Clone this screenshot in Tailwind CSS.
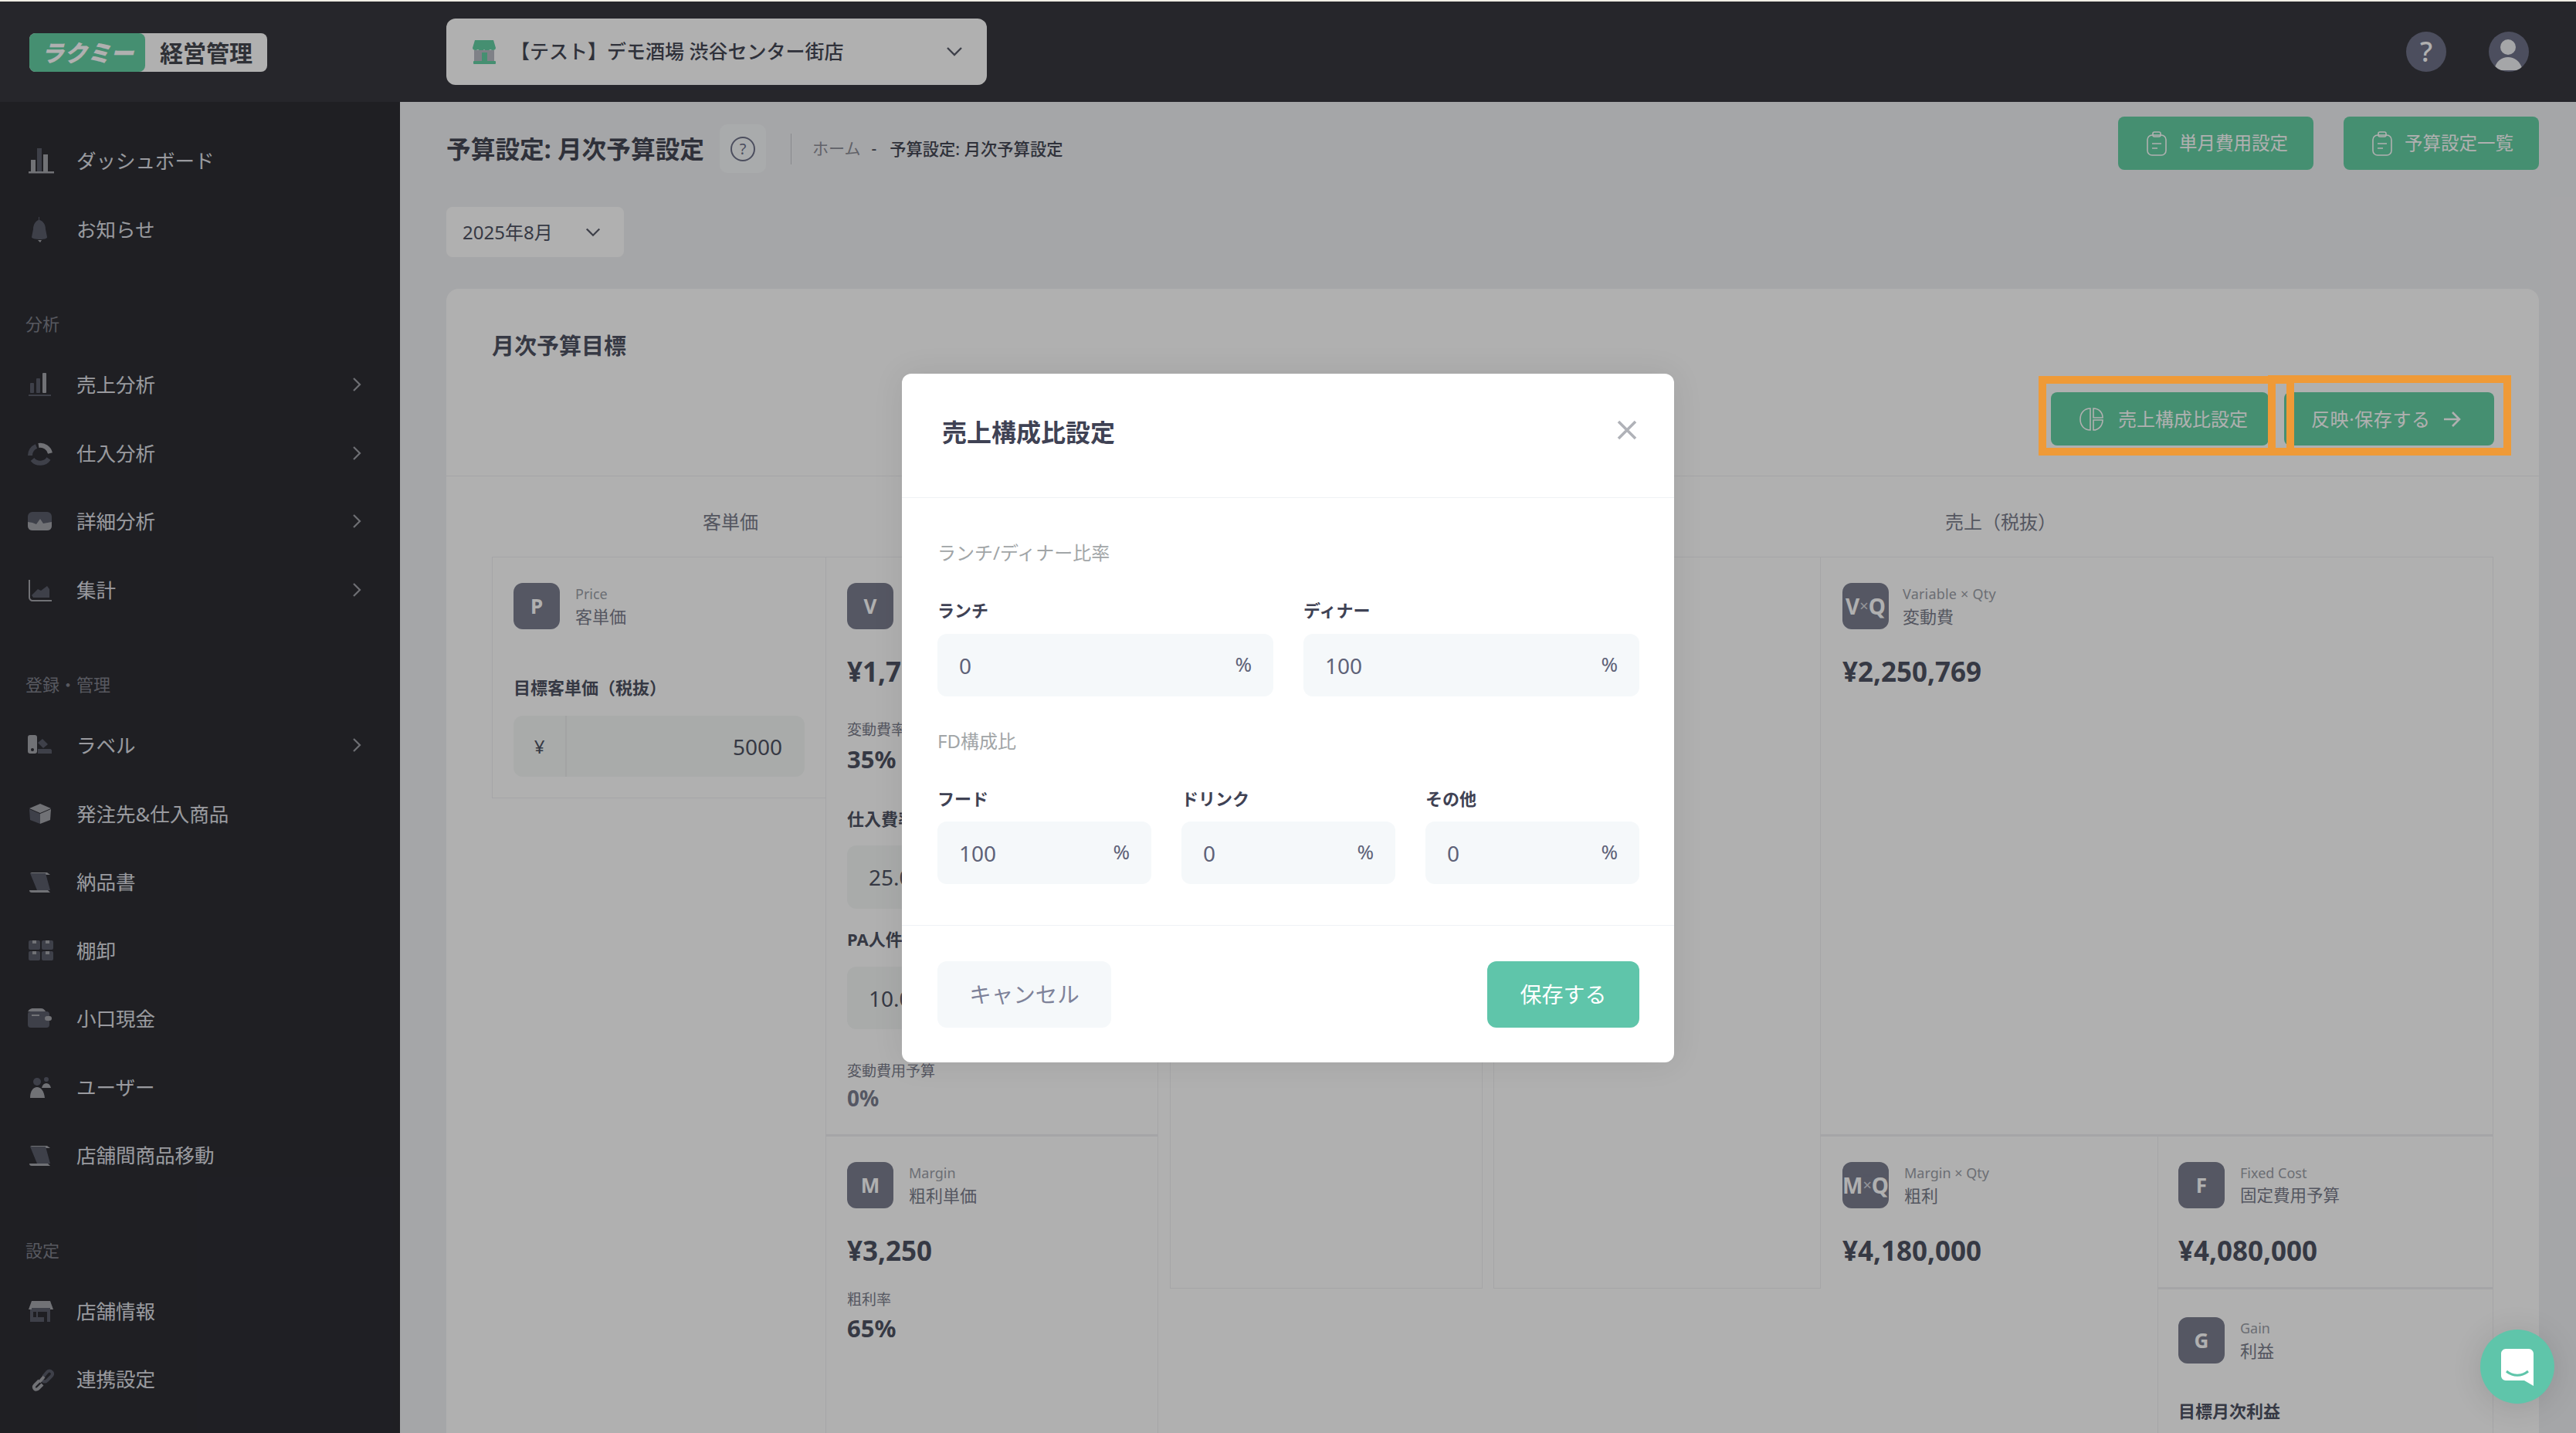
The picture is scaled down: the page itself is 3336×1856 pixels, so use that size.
<!DOCTYPE html>
<html lang="ja">
<head>
<meta charset="utf-8">
<title>予算設定</title>
<script src="https://cdn.jsdelivr.net/npm/@tailwindcss/browser@4"></script>
</head>
<body class="m-0">
<div class="relative w-[3336px] h-[1856px] overflow-hidden bg-[#f0f1f3] text-[#4f5363] [font-family:'Noto_Sans','Noto_Sans_CJK_JP',sans-serif]">

  <!-- Header -->
  <header class="h-[132px] bg-[#38383f] flex items-center border-t-2 border-[#f0ede5] relative">
    <div class="ml-[38px] w-[308px] h-[50px] flex rounded-[8px] overflow-hidden bg-white mt-[2px]">
      <div class="w-[150px] bg-[#65cfa4] rounded-r-[8px] flex items-center justify-center text-white text-[30px] font-black italic">ラクミー</div>
      <div class="flex-1 flex items-center justify-center text-[#45474f] text-[30px] font-bold">経営管理</div>
    </div>
    <div class="ml-[232px] w-[700px] h-[86px] bg-white rounded-[12px] flex items-center pl-[32px] pr-[30px]">
      <svg width="34" height="34" viewBox="0 0 34 34" class="shrink-0"><path d="M5 2h24l3 10c0 3-4 4-7 2-3 2-6 2-8 0-2 2-5 2-8 0-3 2-7 1-7-2z" fill="#65cfa4"/><rect x="4" y="15" width="26" height="14" fill="#b9bcc4"/><rect x="14" y="18" width="7" height="12" fill="#65cfa4"/><rect x="3" y="29" width="29" height="4" rx="1" fill="#65cfa4"/></svg>
      <span class="ml-[17px] text-[25px] text-[#454855] font-medium flex-1 whitespace-nowrap">【テスト】デモ酒場 渋谷センター街店</span>
      <svg width="24" height="24" viewBox="0 0 24 24" fill="none" stroke="#5a5d6b" stroke-width="2.4" class="shrink-0"><path d="M3 7l9 9 9-9"/></svg>
    </div>
    <div class="ml-auto mr-[61px] flex gap-[55px]">
      <div class="w-[52px] h-[52px] rounded-full bg-[#6f7289] flex items-center justify-center text-white text-[36px] font-medium">?</div>
      <div class="w-[52px] h-[52px] rounded-full bg-[#6f7289] overflow-hidden">
        <svg width="52" height="52" viewBox="0 0 52 52"><circle cx="25" cy="20" r="10" fill="#f0f1f3"/><path d="M7 50c2-12 10-17 18-17s16 5 19 17z" fill="#f0f1f3"/></svg>
      </div>
    </div>
  </header>

  <div class="flex h-[1724px]">
    <!-- Sidebar -->
    <aside class="w-[518px] shrink-0 bg-[#2d2d34] pt-[32px] text-[#dfe0e6] text-[25.5px]">
      <div class="h-[88.5px] flex items-center pl-[36px]">
        <svg width="34" height="34" viewBox="0 0 34 34" class="shrink-0"><rect x="4" y="16" width="6" height="15" fill="#a4a5ab"/><rect x="12" y="1" width="6" height="30" fill="#5a5d6b"/><rect x="20" y="9" width="6" height="22" fill="#a4a5ab"/><rect x="1" y="31" width="33" height="2.5" fill="#a4a5ab"/></svg>
        <span class="ml-[29px]">ダッシュボード</span>
      </div>
      <div class="h-[88.5px] flex items-center pl-[36px]">
        <svg width="34" height="34" viewBox="0 0 34 34" class="shrink-0"><path d="M14 1h1v4c5 1 8 6 8 12l2 10c0 2-3 3-9 3s-11-1-11-3l2-10c0-6 3-11 7-12z" fill="#5a5d6b"/><path d="M13 31h5l-2 3z" fill="#a4a5ab"/></svg>
        <span class="ml-[29px]">お知らせ</span>
      </div>

      <div class="pt-[63px] pl-[33px] h-[113px] text-[22px] leading-[30px] text-[#80828c]">分析</div>

      <div class="h-[88.5px] flex items-center pl-[36px] pr-[48px]">
        <svg width="32" height="32" viewBox="0 0 32 32" class="shrink-0"><rect x="3" y="14" width="5" height="13" rx="1" fill="#5a5d6b"/><rect x="11" y="8" width="5" height="19" rx="1" fill="#5a5d6b"/><rect x="19" y="1" width="5" height="26" rx="1" fill="#a4a5ab"/><rect x="1" y="29" width="29" height="2" fill="#5a5d6b"/></svg>
        <span class="ml-[31px] flex-1">売上分析</span>
        <svg width="16" height="20" viewBox="0 0 16 20" fill="none" stroke="#a0a1a8" stroke-width="2.2"><path d="M4 2l8 8-8 8"/></svg>
      </div>
      <div class="h-[88.5px] flex items-center pl-[36px] pr-[48px]">
        <svg width="32" height="32" viewBox="0 0 32 32" class="shrink-0"><path d="M3 19a13 13 0 0 1 8-12" fill="none" stroke="#5a5d6b" stroke-width="6"/><path d="M14 6a13 13 0 0 1 15 10" fill="none" stroke="#a4a5ab" stroke-width="6"/><path d="M27 23a13 13 0 0 1-21 1" fill="none" stroke="#5a5d6b" stroke-width="6"/></svg>
        <span class="ml-[31px] flex-1">仕入分析</span>
        <svg width="16" height="20" viewBox="0 0 16 20" fill="none" stroke="#a0a1a8" stroke-width="2.2"><path d="M4 2l8 8-8 8"/></svg>
      </div>
      <div class="h-[88.5px] flex items-center pl-[36px] pr-[48px]">
        <svg width="32" height="32" viewBox="0 0 32 32" class="shrink-0"><rect x="0" y="4" width="31" height="24" rx="6" fill="#5a5d6b"/><path d="M0 17l6 1 5 2 5-7 4 6 11-2v5c0 3-2 6-6 6H6c-4 0-6-3-6-6z" fill="#a4a5ab"/></svg>
        <span class="ml-[31px] flex-1">詳細分析</span>
        <svg width="16" height="20" viewBox="0 0 16 20" fill="none" stroke="#a0a1a8" stroke-width="2.2"><path d="M4 2l8 8-8 8"/></svg>
      </div>
      <div class="h-[88.5px] flex items-center pl-[36px] pr-[48px]">
        <svg width="32" height="32" viewBox="0 0 32 32" class="shrink-0"><path d="M5 23l8-8 4 2 8-6 3 4v11H7z" fill="#5a5d6b"/><path d="M2 3v23c0 2 2 4 4 4h25" fill="none" stroke="#a4a5ab" stroke-width="2"/></svg>
        <span class="ml-[31px] flex-1">集計</span>
        <svg width="16" height="20" viewBox="0 0 16 20" fill="none" stroke="#a0a1a8" stroke-width="2.2"><path d="M4 2l8 8-8 8"/></svg>
      </div>

      <div class="pt-[63px] pl-[33px] h-[113px] text-[22px] leading-[30px] text-[#80828c]">登録・管理</div>

      <div class="h-[88.5px] flex items-center pl-[36px] pr-[48px]">
        <svg width="32" height="32" viewBox="0 0 32 32" class="shrink-0"><rect x="0" y="3" width="12" height="24" rx="3" fill="#a4a5ab"/><circle cx="6" cy="22" r="2" fill="#2d2d34"/><path d="M13 13l6-5 7 7-6 5z" fill="#5a5d6b"/><path d="M13 21h16c1 0 2 1 2 2v4H13z" fill="#5a5d6b"/></svg>
        <span class="ml-[31px] flex-1">ラベル</span>
        <svg width="16" height="20" viewBox="0 0 16 20" fill="none" stroke="#a0a1a8" stroke-width="2.2"><path d="M4 2l8 8-8 8"/></svg>
      </div>
      <div class="h-[88.5px] flex items-center pl-[36px]">
        <svg width="32" height="32" viewBox="0 0 32 32" class="shrink-0"><path d="M16 3l14 6-14 6L2 9z" fill="#a4a5ab"/><path d="M2 10l14 6v13L3 24z" fill="#5a5d6b"/><path d="M30 10l-14 6v13l13-5z" fill="#a4a5ab"/></svg>
        <span class="ml-[31px]">発注先&amp;仕入商品</span>
      </div>
      <div class="h-[88.5px] flex items-center pl-[36px]">
        <svg width="32" height="32" viewBox="0 0 32 32" class="shrink-0"><path d="M3 4h22l4 3H9z" fill="#a4a5ab"/><path d="M3 5h20l6 22H12z" fill="#5a5d6b"/><path d="M2 27h24l3 3H5c-2 0-3-1-3-3z" fill="#a4a5ab"/></svg>
        <span class="ml-[31px]">納品書</span>
      </div>
      <div class="h-[88.5px] flex items-center pl-[36px]">
        <svg width="34" height="32" viewBox="0 0 34 32" class="shrink-0"><rect x="1" y="3" width="15" height="12" rx="2" fill="#5a5d6b"/><rect x="18" y="3" width="15" height="12" rx="2" fill="#5a5d6b"/><rect x="1" y="17" width="15" height="12" rx="2" fill="#5a5d6b"/><rect x="18" y="17" width="15" height="12" rx="2" fill="#5a5d6b"/><rect x="6" y="3" width="5" height="4" fill="#a4a5ab"/><rect x="23" y="3" width="5" height="4" fill="#a4a5ab"/><rect x="6" y="17" width="5" height="4" fill="#a4a5ab"/><rect x="23" y="17" width="5" height="4" fill="#a4a5ab"/></svg>
        <span class="ml-[29px]">棚卸</span>
      </div>
      <div class="h-[88.5px] flex items-center pl-[36px]">
        <svg width="32" height="32" viewBox="0 0 32 32" class="shrink-0"><path d="M0 10c0-5 3-7 7-7h10c3 0 5 2 6 4H0z" fill="#a4a5ab"/><rect x="0" y="7" width="28" height="21" rx="4" fill="#5a5d6b"/><rect x="22" y="13" width="9" height="6" rx="3" fill="#a4a5ab"/><rect x="5" y="11" width="10" height="2" fill="#a4a5ab"/></svg>
        <span class="ml-[31px]">小口現金</span>
      </div>
      <div class="h-[88.5px] flex items-center pl-[36px]">
        <svg width="32" height="32" viewBox="0 0 32 32" class="shrink-0"><circle cx="12" cy="9" r="5" fill="#5a5d6b"/><circle cx="24" cy="6" r="3" fill="#5a5d6b"/><path d="M18 17c1-4 3-6 6-6s5 2 6 6z" fill="#a4a5ab"/><path d="M3 30c0-9 4-14 9-14s9 5 10 14z" fill="#a4a5ab"/></svg>
        <span class="ml-[31px]">ユーザー</span>
      </div>
      <div class="h-[88.5px] flex items-center pl-[36px]">
        <svg width="32" height="32" viewBox="0 0 32 32" class="shrink-0"><path d="M3 4h22l4 3H9z" fill="#a4a5ab"/><path d="M3 5h20l6 22H12z" fill="#5a5d6b"/><path d="M2 27h24l3 3H5c-2 0-3-1-3-3z" fill="#a4a5ab"/></svg>
        <span class="ml-[31px]">店舗間商品移動</span>
      </div>

      <div class="pt-[63px] pl-[33px] h-[113px] text-[22px] leading-[30px] text-[#80828c]">設定</div>

      <div class="h-[88.5px] flex items-center pl-[36px]">
        <svg width="34" height="32" viewBox="0 0 34 32" class="shrink-0"><path d="M5 3h24l4 11H1z" fill="#a4a5ab"/><rect x="3" y="14" width="4" height="16" fill="#5a5d6b"/><rect x="11" y="14" width="2" height="10" fill="#5a5d6b"/><rect x="25" y="14" width="4" height="16" fill="#5a5d6b"/><rect x="5" y="24" width="16" height="6" fill="#5a5d6b"/><rect x="5" y="12" width="24" height="5" fill="#5a5d6b"/></svg>
        <span class="ml-[29px]">店舗情報</span>
      </div>
      <div class="h-[88.5px] flex items-center pl-[36px]">
        <svg width="34" height="32" viewBox="0 0 34 32" class="shrink-0"><path d="M15 18l-6 6c-2 2-1 4 0 5s3 1 5-1l5-5" fill="none" stroke="#a4a5ab" stroke-width="4"/><path d="M20 13l5-6c2-2 4-2 6 0s1 4-1 6l-5 5c-2 2-4 2-6 0" fill="none" stroke="#5a5d6b" stroke-width="4"/><path d="M15 20l6-7" stroke="#a4a5ab" stroke-width="4"/></svg>
        <span class="ml-[29px]">連携設定</span>
      </div>
    </aside>

    <!-- Main -->
    <main class="flex-1 pl-[60px] pr-[48px] min-w-0">
      <div class="h-[136px] flex justify-between items-start">
        <div class="flex items-center h-[63px] mt-[29px]">
          <h1 class="text-[31.7px] font-bold text-[#454855] whitespace-nowrap">予算設定: 月次予算設定</h1>
          <div class="ml-[20px] w-[60px] h-[63px] rounded-[10px] bg-[#f5f8fa] flex items-center justify-center">
            <svg width="34" height="34" viewBox="0 0 34 34" fill="none"><circle cx="17" cy="17" r="15" stroke="#6f7289" stroke-width="2"/><text x="17" y="24" text-anchor="middle" font-size="20" fill="#6f7289">?</text></svg>
          </div>
          <div class="ml-[32px] w-[1px] h-[40px] bg-[#c5c7cc]"></div>
          <div class="ml-[27px] text-[21px] text-[#8d8f98] whitespace-nowrap">ホーム</div>
          <div class="ml-[14px] text-[21px] text-[#454855]">-</div>
          <div class="ml-[17px] text-[21.3px] text-[#454855] font-medium whitespace-nowrap">予算設定: 月次予算設定</div>
        </div>
        <div class="flex gap-[39px] mt-[19px]">
          <div class="w-[253px] h-[69px] rounded-[8px] bg-[#65cfa4] flex items-center pl-[36px] text-white text-[23.5px] whitespace-nowrap">
            <svg width="28" height="34" viewBox="0 0 28 34" fill="none" stroke="#fff" stroke-width="1.6" class="shrink-0"><rect x="2" y="6" width="24" height="26" rx="6"/><rect x="9" y="2" width="10" height="6" rx="2"/><path d="M8 17h12M8 23h7"/></svg>
            <span class="ml-[15px]">単月費用設定</span>
          </div>
          <div class="w-[253px] h-[69px] rounded-[8px] bg-[#65cfa4] flex items-center pl-[36px] text-white text-[23.5px] whitespace-nowrap">
            <svg width="28" height="34" viewBox="0 0 28 34" fill="none" stroke="#fff" stroke-width="1.6" class="shrink-0"><rect x="2" y="6" width="24" height="26" rx="6"/><rect x="9" y="2" width="10" height="6" rx="2"/><path d="M8 17h12M8 23h7"/></svg>
            <span class="ml-[15px]">予算設定一覧</span>
          </div>
        </div>
      </div>

      <div class="w-[230px] h-[65px] bg-white rounded-[8px] flex items-center pl-[21px] pr-[29px] justify-between">
        <span class="text-[24px] text-[#4f5363] whitespace-nowrap">2025年8月</span>
        <svg width="22" height="22" viewBox="0 0 24 24" fill="none" stroke="#5a5d6b" stroke-width="2.4" class="shrink-0"><path d="M3 7l9 9 9-9"/></svg>
      </div>

      <!-- Card -->
      <section class="mt-[41px] bg-white rounded-t-[16px] h-[1482px] overflow-hidden">
        <div class="h-[243px] border-b border-[#eff0f2] flex justify-between items-start pl-[59px] pr-[58px]">
          <h2 class="mt-[54px] text-[29px] leading-[40px] font-bold text-[#4f5363]">月次予算目標</h2>
          <div class="flex gap-[20px] mt-[134px]">
            <div class="w-[282px] h-[69px] rounded-[8px] bg-[#65cfa4] flex items-center pl-[36px] text-white text-[24px] whitespace-nowrap">
              <svg width="34" height="32" viewBox="0 0 34 32" fill="none" stroke="#fff" stroke-width="1.6" class="shrink-0"><path d="M15 2C7 2 2 8 2 16s5 14 13 14z"/><path d="M19 2c7 0 12 5 12 12H19z"/><path d="M19 17h12c0 7-5 13-12 13z"/></svg>
              <span class="ml-[17px]">売上構成比設定</span>
            </div>
            <div class="w-[272px] h-[69px] rounded-[8px] bg-[#65cfa4] flex items-center pl-[35px] text-white text-[24px] whitespace-nowrap">
              <span class="tracking-[0.6px]">反映·保存する</span>
              <svg width="24" height="24" viewBox="0 0 24 24" fill="none" stroke="#fff" stroke-width="2.6" class="ml-[15px] shrink-0"><path d="M2 12h19M13 3l9 9-9 9"/></svg>
            </div>
          </div>
        </div>

        <div class="pl-[59px]">
          <div class="h-[104px] pt-[44px] flex text-[24px] leading-[30px] text-[#7a7d8c]">
            <div class="w-[618px] text-center">客単価</div>
            <div class="ml-[693px] w-[1286px] text-center">売上（税抜）</div>
          </div>

          <div class="flex items-start">
            <!-- Col 1 -->
            <div class="w-[433px] h-[313px] border border-[#eff0f2] px-[27px] pt-[33px] shrink-0">
              <div class="flex items-center gap-[20px]">
                <div class="w-[60px] h-[60px] rounded-[12px] bg-[#7b7e90] flex items-center justify-center text-white text-[26px] font-bold">P</div>
                <div class="text-[#9ca0a8]"><div class="text-[18px] leading-[26px]">Price</div><div class="text-[22px] leading-[32px] text-[#7a7d8c]">客単価</div></div>
              </div>
              <div class="mt-[60px] text-[22px] leading-[30px] font-bold">目標客単価（税抜）</div>
              <div class="mt-[22px] h-[79px] rounded-[12px] bg-[#f5f8f7] flex items-center text-[28px]">
                <div class="w-[69px] h-full border-r-2 border-[#eceeee] flex items-center justify-center text-[24px]">¥</div>
                <div class="flex-1 text-right pr-[29px]">5000</div>
              </div>
            </div>
            <!-- Col 2 -->
            <div class="w-[431px] h-[1200px] border-x border-[#eff0f2] border-t border-t-[#eff0f2] shrink-0 -ml-[1px]">
              <div class="h-[747px] px-[27px] pt-[33px]">
                <div class="flex items-center gap-[20px]">
                  <div class="w-[60px] h-[60px] rounded-[12px] bg-[#7b7e90] flex items-center justify-center text-white text-[26px] font-bold">V</div>
                  <div class="text-[#9ca0a8]"><div class="text-[18px] leading-[26px]">Variable</div><div class="text-[22px] leading-[32px] text-[#7a7d8c]">変動単価</div></div>
                </div>
                <div class="mt-[30px] h-[50px] text-[35px] leading-[50px] font-bold">¥1,750</div>
                <div class="mt-[37px] text-[19px] leading-[26px] text-[#7a7d8c]">変動費率</div>
                <div class="mt-[5px] text-[31px] leading-[40px] font-bold">35%</div>
                <div class="mt-[42px] text-[22px] leading-[30px] font-bold">仕入費率</div>
                <div class="mt-[20px] h-[82px] rounded-[12px] bg-[#f5f8f7] flex items-center pl-[28px] text-[28px]">25.0</div>
                <div class="mt-[24px] text-[22px] leading-[30px] font-bold">PA人件費率</div>
                <div class="mt-[21px] h-[81px] rounded-[12px] bg-[#f5f8f7] flex items-center pl-[28px] text-[28px]">10.0</div>
                <div class="mt-[41px] text-[19px] leading-[26px] text-[#7a7d8c]">変動費用予算</div>
                <div class="mt-[2px] text-[28px] leading-[40px] font-bold text-[#7b7e90]">0%</div>
              </div>
              <div class="border-t-[3px] border-[#eff0f2] px-[27px] pt-[33px]">
                <div class="flex items-center gap-[20px]">
                  <div class="w-[60px] h-[60px] rounded-[12px] bg-[#7b7e90] flex items-center justify-center text-white text-[26px] font-bold">M</div>
                  <div class="text-[#9ca0a8]"><div class="text-[18px] leading-[26px]">Margin</div><div class="text-[22px] leading-[32px] text-[#7a7d8c]">粗利単価</div></div>
                </div>
                <div class="mt-[30px] h-[50px] text-[35px] leading-[50px] font-bold">¥3,250</div>
                <div class="mt-[25px] text-[19px] leading-[26px] text-[#7a7d8c]">粗利率</div>
                <div class="mt-[4px] text-[31px] leading-[40px] font-bold">65%</div>
              </div>
            </div>
            <!-- Col 3 -->
            <div class="ml-[15px] w-[405px] h-[948px] border border-[#eff0f2] shrink-0"></div>
            <!-- Col 4 -->
            <div class="ml-[14px] w-[424px] h-[948px] border border-[#eff0f2] shrink-0"></div>
            <!-- Col 5 -->
            <div class="w-[871px] h-[1200px] flex flex-col border-r border-t border-[#eff0f2] shrink-0">
              <div class="h-[747px] px-[28px] pt-[33px] shrink-0">
                <div class="flex items-center gap-[18px]">
                  <div class="w-[60px] h-[60px] rounded-[12px] bg-[#7b7e90] flex items-center justify-center text-white text-[28px] font-bold whitespace-nowrap overflow-hidden">V<span class="text-[20px] font-normal opacity-70">×</span>Q</div>
                  <div class="text-[#9ca0a8]"><div class="text-[18px] leading-[26px] tracking-[0.2px]">Variable × Qty</div><div class="text-[22px] leading-[32px] text-[#7a7d8c]">変動費</div></div>
                </div>
                <div class="mt-[30px] h-[50px] text-[35px] leading-[50px] font-bold">¥2,250,769</div>
              </div>
              <div class="flex flex-1 border-t-[3px] border-[#eff0f2]">
                <div class="w-[437px] border-r border-[#eff0f2] px-[28px] pt-[33px] shrink-0">
                  <div class="flex items-center gap-[20px]">
                    <div class="w-[60px] h-[60px] rounded-[12px] bg-[#7b7e90] flex items-center justify-center text-white text-[28px] font-bold whitespace-nowrap overflow-hidden">M<span class="text-[20px] font-normal opacity-70">×</span>Q</div>
                    <div class="text-[#9ca0a8]"><div class="text-[18px] leading-[26px]">Margin × Qty</div><div class="text-[22px] leading-[32px] text-[#7a7d8c]">粗利</div></div>
                  </div>
                  <div class="mt-[30px] h-[50px] text-[35px] leading-[50px] font-bold">¥4,180,000</div>
                </div>
                <div class="flex-1">
                  <div class="h-[198px] border-b-[3px] border-[#eff0f2] px-[26px] pt-[33px]">
                    <div class="flex items-center gap-[20px]">
                      <div class="w-[60px] h-[60px] rounded-[12px] bg-[#7b7e90] flex items-center justify-center text-white text-[26px] font-bold">F</div>
                      <div class="text-[#9ca0a8]"><div class="text-[18px] leading-[26px]">Fixed Cost</div><div class="text-[21.5px] leading-[32px] text-[#7a7d8c]">固定費用予算</div></div>
                    </div>
                    <div class="mt-[30px] h-[50px] text-[35px] leading-[50px] font-bold">¥4,080,000</div>
                  </div>
                  <div class="px-[26px] pt-[36px]">
                    <div class="flex items-center gap-[20px]">
                      <div class="w-[60px] h-[60px] rounded-[12px] bg-[#7b7e90] flex items-center justify-center text-white text-[26px] font-bold">G</div>
                      <div class="text-[#9ca0a8]"><div class="text-[18px] leading-[26px]">Gain</div><div class="text-[22px] leading-[32px] text-[#7a7d8c]">利益</div></div>
                    </div>
                    <div class="mt-[46px] text-[22px] leading-[30px] font-bold">目標月次利益</div>
                  </div>
                </div>
              </div>
            </div>
          </div>
        </div>
      </section>
    </main>
  </div>

  <!-- Dim overlay -->
  <div class="absolute left-0 right-0 top-[2px] bottom-0 bg-black/[0.31]"></div>

  <!-- Highlight rectangles -->
  <div class="absolute left-[2640px] top-[487px] w-[331px] h-[103px] border-[10px] border-[#ef9a37]"></div>
  <div class="absolute left-[2937px] top-[486px] w-[315px] h-[104px] border-[10px] border-[#ef9a37]"></div>

  <!-- Modal -->
  <div class="absolute left-[1168px] top-[484px] w-[1000px] h-[892px] bg-white rounded-[12px] shadow-[0_0_40px_rgba(0,0,0,0.08)] flex flex-col">
    <div class="h-[161px] border-b border-[#eff2f5] pl-[52px] pr-[48px] flex justify-between items-start pt-[56px] shrink-0">
      <h3 class="text-[32px] leading-[40px] font-bold text-[#3f4254]">売上構成比設定</h3>
      <svg width="26" height="26" viewBox="0 0 26 26" fill="none" stroke="#b0b2b8" stroke-width="3.6" class="mt-[4px]"><path d="M2 2l22 22M24 2L2 24"/></svg>
    </div>
    <div class="pl-[46px] pr-[45px] flex-1">
      <div class="pt-[56px] text-[24px] leading-[30px] text-[#a1a5a7]">ランチ/ディナー比率</div>
      <div class="mt-[44px] grid grid-cols-2 gap-x-[39px]">
        <div>
          <div class="text-[22px] leading-[30px] font-bold text-[#3f4254]">ランチ</div>
          <div class="mt-[16px] h-[81px] bg-[#f5f8fa] rounded-[12px] flex items-center justify-between px-[28px] text-[28px] text-[#5e6278]"><span>0</span><span class="text-[26px] -mt-[2px]">%</span></div>
        </div>
        <div>
          <div class="text-[22px] leading-[30px] font-bold text-[#3f4254]">ディナー</div>
          <div class="mt-[16px] h-[81px] bg-[#f5f8fa] rounded-[12px] flex items-center justify-between px-[28px] text-[28px] text-[#5e6278]"><span>100</span><span class="text-[26px] -mt-[2px]">%</span></div>
        </div>
      </div>
      <div class="mt-[43px] text-[24px] leading-[30px] text-[#a1a5a7]">FD構成比</div>
      <div class="mt-[44px] grid grid-cols-3 gap-x-[39px]">
        <div>
          <div class="text-[22px] leading-[30px] font-bold text-[#3f4254]">フード</div>
          <div class="mt-[15px] h-[81px] bg-[#f5f8fa] rounded-[12px] flex items-center justify-between px-[28px] text-[28px] text-[#5e6278]"><span>100</span><span class="text-[26px] -mt-[2px]">%</span></div>
        </div>
        <div>
          <div class="text-[22px] leading-[30px] font-bold text-[#3f4254]">ドリンク</div>
          <div class="mt-[15px] h-[81px] bg-[#f5f8fa] rounded-[12px] flex items-center justify-between px-[28px] text-[28px] text-[#5e6278]"><span>0</span><span class="text-[26px] -mt-[2px]">%</span></div>
        </div>
        <div>
          <div class="text-[22px] leading-[30px] font-bold text-[#3f4254]">その他</div>
          <div class="mt-[15px] h-[81px] bg-[#f5f8fa] rounded-[12px] flex items-center justify-between px-[28px] text-[28px] text-[#5e6278]"><span>0</span><span class="text-[26px] -mt-[2px]">%</span></div>
        </div>
      </div>
    </div>
    <div class="border-t border-[#eff2f5] h-[178px] pl-[46px] pr-[45px] pt-[46px] flex justify-between shrink-0">
      <div class="w-[225px] h-[86px] rounded-[12px] bg-[#f5f8fa] flex items-center justify-center text-[28.5px] text-[#7e8299]">キャンセル</div>
      <div class="w-[197px] h-[86px] rounded-[12px] bg-[#5fc5aa] flex items-center justify-center text-[28px] text-white">保存する</div>
    </div>
  </div>

  <!-- Chat launcher -->
  <div class="absolute left-[3212px] top-[1722px] w-[96px] h-[96px] rounded-full bg-[#5fc5aa] shadow-[0_4px_40px_rgba(0,0,0,0.12)] flex items-center justify-center">
    <svg width="42" height="48" viewBox="0 0 42 48" class="mt-[2px]"><path d="M6 0h30c3 0 6 3 6 6v42l-12-7H6c-3 0-6-3-6-6V6c0-3 3-6 6-6z" fill="#fff"/><path d="M7 29c8 7 20 7 28 0" fill="none" stroke="#5fc5aa" stroke-width="3"/></svg>
  </div>
</div>
</body>
</html>
